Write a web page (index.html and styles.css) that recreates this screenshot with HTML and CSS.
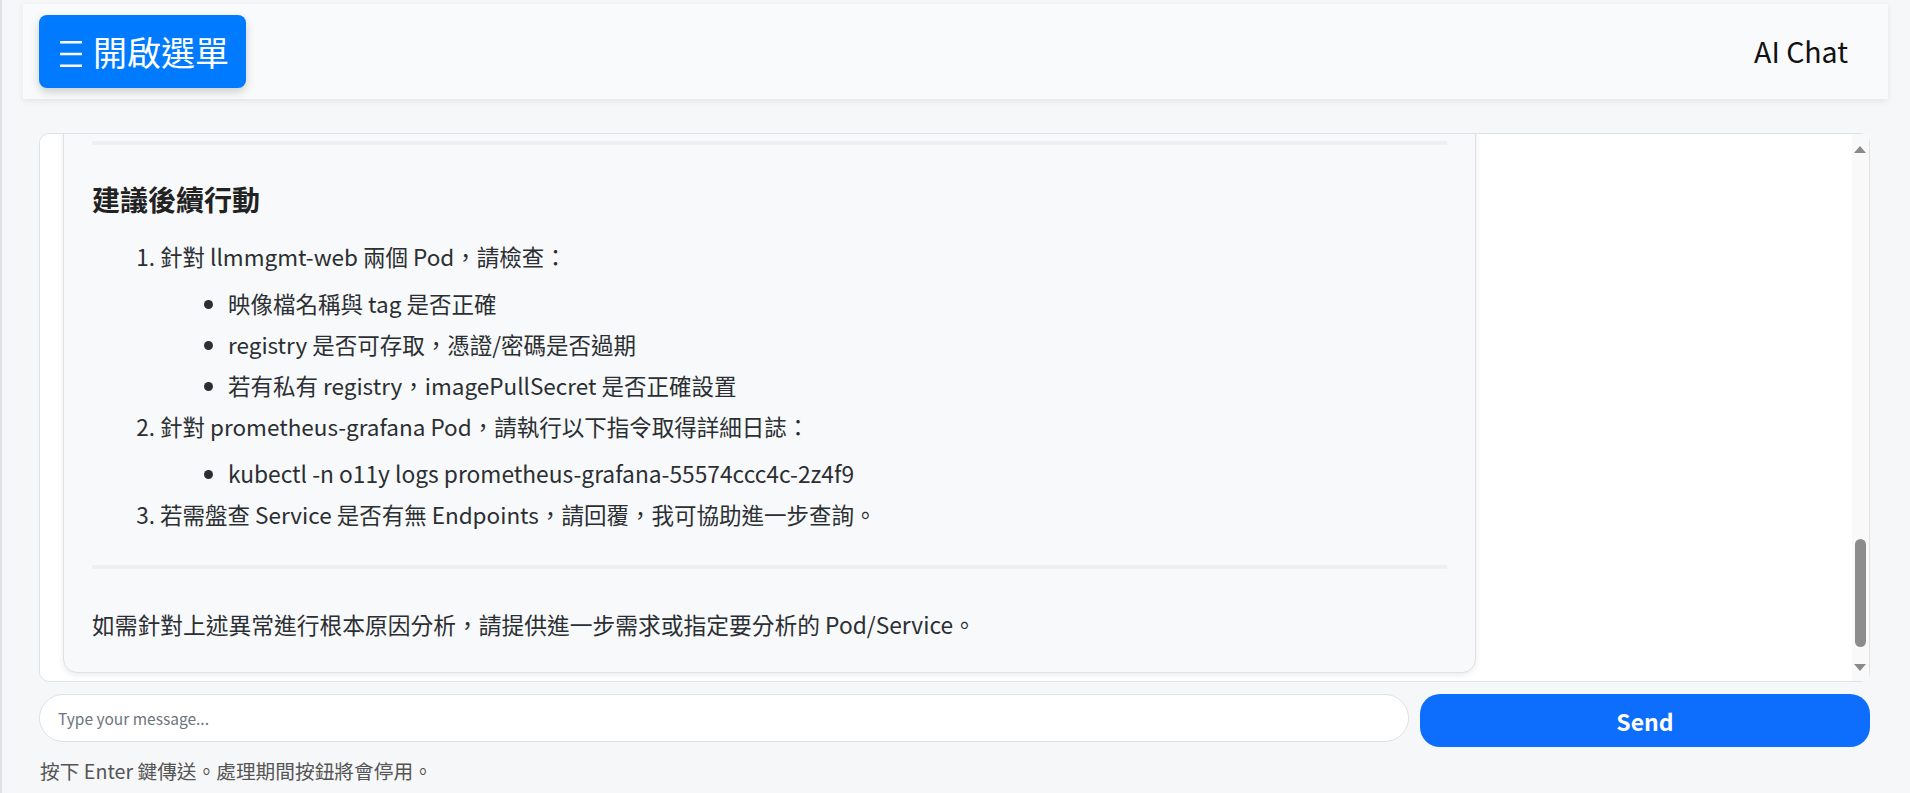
FILE: index.html
```html
<!DOCTYPE html>
<html lang="zh-Hant">
<head>
<meta charset="utf-8">
<title>AI Chat</title>
<link rel="stylesheet" href="styles.css">
</head>
<body>
<div class="app">
  <div class="rail"></div>
  <div class="main">
    <header class="topbar">
      <button class="menu-btn" type="button">
        <svg class="menu-icon" width="24" height="28" viewBox="0 0 24 28" aria-hidden="true">
          <path d="M1 2.3H23M1 14H23M1 25.7H23" stroke="#fff" stroke-width="2.4" fill="none"/>
        </svg>
        <span>開啟選單</span>
      </button>
      <div class="brand">AI Chat</div>
    </header>

    <section class="chat">
      <div class="chat-frame">
        <div class="chat-log">
          <div class="thread">
            <div class="msg bot">
              <div class="earlier"></div>
              <hr>
              <h3>建議後續行動</h3>
              <ol>
                <li>針對 llmmgmt-web 兩個 Pod，請檢查：
                  <ul>
                    <li>映像檔名稱與 tag 是否正確</li>
                    <li>registry 是否可存取，憑證/密碼是否過期</li>
                    <li>若有私有 registry，imagePullSecret 是否正確設置</li>
                  </ul>
                </li>
                <li>針對 prometheus-grafana Pod，請執行以下指令取得詳細日誌：
                  <ul>
                    <li><code class="cmd">kubectl -n o11y logs prometheus-grafana-55574ccc4c-2z4f9</code></li>
                  </ul>
                </li>
                <li>若需盤查 Service 是否有無 Endpoints，請回覆，我可協助進一步查詢。</li>
              </ol>
              <hr>
              <p>如需針對上述異常進行根本原因分析，請提供進一步需求或指定要分析的 Pod/Service。</p>
            </div>
          </div>
        </div>
        <div class="scrollbar" aria-hidden="true">
          <span class="sb-arrow sb-up"></span>
          <span class="sb-thumb"></span>
          <span class="sb-arrow sb-down"></span>
        </div>
      </div>

      <form class="composer" onsubmit="return false;">
        <input class="composer-input" type="text" placeholder="Type your message...">
        <button class="send-btn" type="submit">Send</button>
      </form>
      <p class="hint">按下 Enter 鍵傳送。處理期間按鈕將會停用。</p>
    </section>
  </div>
</div>
</body>
</html>
```

FILE: styles.css
```css
* { box-sizing: border-box; }

html, body {
  margin: 0;
  padding: 0;
  height: 100%;
}

body {
  background: #f6f7f9;
  font-family: "Noto Sans CJK TC", "Noto Sans", sans-serif;
  color: #333;
  overflow: hidden;
}

.app {
  display: flex;
  height: 100%;
}

.rail {
  width: 2px;
  flex: 0 0 2px;
  background: #dfe1e5;
}

.main {
  flex: 1;
  min-width: 0;
  padding: 4px 22px 0 21px;
}

/* ---------- header ---------- */
.topbar {
  height: 95px;
  display: flex;
  align-items: center;
  justify-content: space-between;
  padding: 0 40px 0 16px;
  background: #f9fafb;
  box-shadow: 0 2px 6px rgba(0, 0, 0, 0.08);
}

.menu-btn {
  display: inline-flex;
  align-items: center;
  gap: 10px;
  height: 73px;
  padding: 0 17px 0 20px;
  border: 0;
  border-radius: 8px;
  background: #007bff;
  color: #fff;
  font-family: "Noto Sans CJK TC", "Noto Sans", sans-serif;
  font-size: 34px;
  line-height: 1;
  box-shadow: 0 4px 10px rgba(0, 0, 0, 0.18);
}

.menu-icon {
  display: block;
  margin-top: 4px;
}

.brand {
  font-size: 28.5px;
  color: #111;
  line-height: 1;
}

/* ---------- chat ---------- */
.chat {
  margin: 34px 18px 0 16px;
}

.chat-frame {
  position: relative;
  height: 549px;
}

.chat-log {
  height: 100%;
  display: flex;
  flex-direction: column-reverse;
  overflow-y: auto;
  scrollbar-width: none;
  background: #fff;
  border: 1px solid #dee2e6;
  border-radius: 10px;
  padding: 16px 40px 8px 23px;
}

.chat-log::-webkit-scrollbar { display: none; }

.thread { flex: 0 0 auto; }

.msg {
  width: 80%;
  background: #f8f9fa;
  border: 1px solid #dee2e6;
  border-radius: 14px;
  box-shadow: 0 2px 6px rgba(0, 0, 0, 0.08);
  padding: 28px 28px 27px;
  font-size: 22.5px;
  line-height: 41px;
  color: #2b2f33;
}

.earlier { height: 2040px; }

.msg hr {
  height: 4px;
  border: 0;
  background: #eeeff1;
  margin: 0;
}

.msg h3 {
  margin: 36px 0 19px;
  font-size: 28px;
  line-height: 36px;
  font-weight: 700;
  color: #222;
}

.msg ol {
  margin: 0 0 30px;
  padding-left: 68px;
}

.msg ul {
  margin: 6px 0 0;
  padding-left: 68px;
  list-style-type: disc;
}

.msg .cmd {
  font-family: inherit;
  font-size: 22.75px;
  color: inherit;
}

.msg p {
  margin: 35px 0 0;
  font-size: 22.75px;
}

/* drawn scrollbar (the log is scrolled to its end) */
.scrollbar {
  position: absolute;
  top: 1px;
  bottom: 1px;
  right: 1px;
  width: 17px;
  background: #f9f9f9;
}

.sb-arrow {
  position: absolute;
  left: 2px;
  width: 0;
  height: 0;
  border-left: 6.5px solid transparent;
  border-right: 6.5px solid transparent;
}

.sb-up {
  top: 12px;
  border-bottom: 7px solid #8a8a8a;
}

.sb-down {
  bottom: 10px;
  border-top: 7px solid #8a8a8a;
}

.sb-thumb {
  position: absolute;
  left: 3px;
  top: 405px;
  width: 11px;
  height: 108px;
  border-radius: 6px;
  background: #8c8c8c;
}

/* ---------- composer ---------- */
.composer {
  display: flex;
  align-items: flex-start;
  gap: 11px;
  margin-top: 12px;
}

.composer-input {
  flex: 1;
  min-width: 0;
  height: 48px;
  border: 1px solid #dee2e6;
  border-radius: 24px;
  background: #fff;
  padding: 0 18px;
  font-family: "Noto Sans CJK TC", "Noto Sans", sans-serif;
  font-size: 15.5px;
  color: #333;
  outline: none;
}

.composer-input::placeholder { color: #6c757d; }

.send-btn {
  flex: 0 0 450px;
  height: 53px;
  border: 0;
  border-radius: 20px;
  background: #0d6efd;
  color: #fff;
  font-family: "Noto Sans CJK TC", "Noto Sans", sans-serif;
  font-size: 23px;
  font-weight: 600;
}

.hint {
  margin: 9px 0 0 1px;
  font-size: 19.7px;
  line-height: 30px;
  color: #555;
}
```
